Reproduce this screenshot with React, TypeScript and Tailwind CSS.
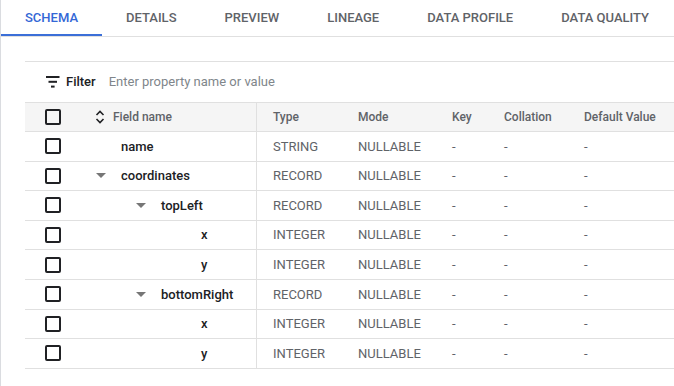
import React from "react";

const tabs = ["SCHEMA", "DETAILS", "PREVIEW", "LINEAGE", "DATA PROFILE", "DATA QUALITY"];

type Row = { name: string; type: string; level: 0 | 1 | 2; expandable: boolean };

const rows: Row[] = [
  { name: "name", type: "STRING", level: 0, expandable: false },
  { name: "coordinates", type: "RECORD", level: 0, expandable: true },
  { name: "topLeft", type: "RECORD", level: 1, expandable: true },
  { name: "x", type: "INTEGER", level: 2, expandable: false },
  { name: "y", type: "INTEGER", level: 2, expandable: false },
  { name: "bottomRight", type: "RECORD", level: 1, expandable: true },
  { name: "x", type: "INTEGER", level: 2, expandable: false },
  { name: "y", type: "INTEGER", level: 2, expandable: false },
];

const levelPad = ["pl-0", "pl-[40px]", "pl-[80px]"];

function Checkbox() {
  return <div className="w-4 h-4 border-2 border-[#202124] rounded-[2px] box-border" />;
}

function Triangle() {
  return (
    <svg width="10" height="5" viewBox="0 0 10 5" className="ml-[1px]">
      <path d="M0 0 L10 0 L5 5 Z" fill="#767676" />
    </svg>
  );
}

function SortIcon() {
  return (
    <svg width="10" height="16" viewBox="0 0 10 16">
      <polyline points="1.5,6 5,2.5 8.5,6" fill="none" stroke="#202124" strokeWidth="1.6" />
      <polyline points="1.5,10 5,13.5 8.5,10" fill="none" stroke="#202124" strokeWidth="1.6" />
    </svg>
  );
}

function FilterIcon() {
  return (
    <svg width="14" height="12" viewBox="0 0 14 12">
      <rect x="0" y="0" width="13.5" height="2" fill="#202124" />
      <rect x="2.5" y="4.8" width="8.5" height="2" fill="#202124" />
      <rect x="5" y="9.6" width="3.6" height="2" fill="#202124" />
    </svg>
  );
}

export default function App() {
  return (
    <div className="w-[674px] h-[386px] bg-white border-l border-[#dadce0] font-['Roboto',sans-serif] text-[13px] overflow-hidden">
      <div className="flex h-[37px] border-b border-[#e0e0e0]">
        {tabs.map((t, i) => (
          <div
            key={t}
            className={
              i === 0
                ? "h-[36px] px-6 flex items-center font-medium text-[#3367d6] border-b-2 border-[#3b6fd8] pt-[1px]"
                : "h-[36px] px-6 flex items-center font-medium text-[#5f6368] pb-[1px]"
            }
          >
            {t}
          </div>
        ))}
      </div>

      <div className="pl-6 mt-6">
        <div className="border-t border-[#e0e0e0] h-[41px] flex items-center pl-[21px]">
          <FilterIcon />
          <span className="ml-[6px] font-medium text-[#202124]">Filter</span>
          <span className="ml-[13px] text-[#80868b]">Enter property name or value</span>
        </div>

        <div className="border-t border-[#e0e0e0]">
          <div className="flex h-[28px] bg-[#f5f5f5] border-b border-[#e0e0e0] box-content text-[#5f6368] text-[12px] font-medium">
            <div className="w-[54px] pl-[20px] flex items-center">
              <Checkbox />
            </div>
            <div className="w-[178px] pl-4 flex items-center border-r border-[#e0e0e0] text-[#5f6368]">
              <SortIcon />
              <span className="ml-[8px]">Field name</span>
            </div>
            <div className="w-[85px] pl-4 flex items-center">Type</div>
            <div className="w-[94px] pl-4 flex items-center">Mode</div>
            <div className="w-[52px] pl-4 flex items-center">Key</div>
            <div className="w-[80px] pl-4 flex items-center">Collation</div>
            <div className="flex-1 pl-4 flex items-center">Default Value</div>
          </div>

          {rows.map((r, i) => (
            <div key={i} className="flex h-[29.6px] border-b border-[#e0e0e0] text-[#5f6368]">
              <div className="w-[54px] pl-[20px] flex items-center">
                <Checkbox />
              </div>
              <div className="w-[178px] pl-4 flex items-center border-r border-[#e0e0e0]">
                <div className={`flex items-center ${levelPad[r.level]}`}>
                  <div className="w-[26px] flex items-center">{r.expandable ? <Triangle /> : null}</div>
                  <span className="font-medium text-[#202124]">{r.name}</span>
                </div>
              </div>
              <div className="w-[85px] pl-4 flex items-center">{r.type}</div>
              <div className="w-[94px] pl-4 flex items-center">NULLABLE</div>
              <div className="w-[52px] pl-4 flex items-center">-</div>
              <div className="w-[80px] pl-4 flex items-center">-</div>
              <div className="flex-1 pl-4 flex items-center">-</div>
            </div>
          ))}
        </div>
      </div>
    </div>
  );
}
